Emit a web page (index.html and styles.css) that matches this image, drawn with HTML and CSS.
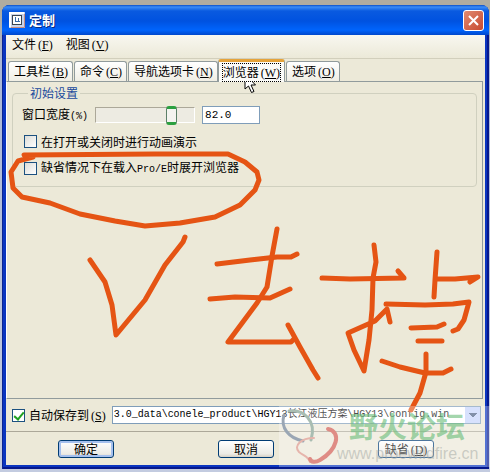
FILE: index.html
```
<!DOCTYPE html>
<html lang="zh-CN">
<head>
	<meta charset="utf-8">
	<title>定制</title>
	<link rel="stylesheet" href="styles.css">
</head>

<body>
	<div class="window">
		<!-- 标题栏 -->
		<div class="titlebar">
			<svg class="appicon" width="16" height="16" viewBox="0 0 16 16">
				<rect width="16" height="16" fill="#c9d3ea"/>
				<path d="M1 15V1h14" fill="none" stroke="#fff" stroke-width="2"/>
				<rect x="3.500" y="3.500" width="9" height="9" fill="#fff" stroke="#3a4450"/>
				<path d="M6.500 5v5M6 9.500h5M9.500 6v4" fill="none" stroke="#3c6ca8"/>
				<path d="M15.500 2v13.500H2" fill="none" stroke="#c98d80"/>
			</svg>
			<h1>定制</h1>
			<button class="xbutton" aria-label="关闭">
				<svg width="13" height="13" viewBox="0 0 13 13"><path d="M2 2l9 9M11 2l-9 9" stroke="#fff" stroke-width="2"/></svg>
			</button>
		</div>

		<div class="client">
			<div class="menubar">
				<button>文件<span class="key">(<u>F</u>)</span></button>
				<button>视图<span class="key">(<u>V</u>)</span></button>
			</div>

			<!-- 选项卡 -->
			<div class="tabs" role="tablist">
				<button role="tab">工具栏<span class="key">(<u>B</u>)</span></button>
				<button role="tab">命令<span class="key">(<u>C</u>)</span></button>
				<button role="tab">导航选项卡<span class="key">(<u>N</u>)</span></button>
				<button role="tab" class="active" aria-selected="true"><span class="focus">浏览器<span class="key">(<u>W</u>)</span></span></button>
				<button role="tab">选项<span class="key">(<u>O</u>)</span></button>
			</div>

			<div class="panel">
				<fieldset>
					<legend>初始设置</legend>
					<div class="row">
						<label for="width">窗口宽度<span class="en">(%)</span></label>
						<input type="range" id="width" min="0" max="100" value="80">
						<input type="text" class="num" value="82.0" aria-label="窗口宽度">
					</div>
					<div class="row">
						<input type="checkbox" id="anim">
						<label for="anim">在打开或关闭时进行动画演示</label>
					</div>
					<div class="row">
						<input type="checkbox" id="expand">
						<label for="expand">缺省情况下在载入<span class="en">Pro/E</span>时展开浏览器</label>
					</div>
				</fieldset>
			</div>

			<div class="savebar">
				<input type="checkbox" id="save" checked>
				<label for="save">自动保存到<span class="key">(<u>S</u>)</span></label>
				<select aria-label="保存位置">
					<option>3.0_data\conele_product\HGY13长江液压方案\HGY13\config.win</option>
				</select>
			</div>

			<div class="buttons">
				<button class="default">确定</button>
				<button>取消</button>
				<button>缺省<span class="key">(<u>D</u>)</span></button>
			</div>
		</div>
	</div>

	<!-- 手写标注 -->
	<svg class="ink" width="490" height="472" viewBox="0 0 490 472">
		<g fill="none" stroke="#e55414" stroke-width="5" stroke-linecap="round" stroke-linejoin="round">
			<path d="M24 155L155 154H228L245 162L257 172L259 180L255 190L240 205L215 217L180 223L145 226L115 221L80 214L50 203L22 197L13 188L11 172L18 161L33 157"/>
			<path d="M90 260L105 282L112 305L116 335L145 300L165 265L183 242L185 237"/>
			<path d="M277 229L272 256L267 287L257 303L228 342H291L294 339"/>
			<path d="M217 264L250 260L277 257H291L297 254"/>
			<path d="M210 299L235 297L270 298L290 289"/>
			<path d="M288 325L300 347L313 370L318 378"/>
			<path d="M322 278L350 279L404 278L398 271"/>
			<path d="M374 245L376 262L373 278L372 310L369 340L364 371L354 350L348 333L375 321L387 309L390 322"/>
			<path d="M386 304L425 305L453 304L469 302L464 320L458 329L453 331"/>
			<path d="M437 252L435 280L434 297M437 279H455L478 277L470 282"/>
			<path d="M411 328L437 327L444 324M418 341H442"/>
			<path d="M382 361L400 367L425 373H443L451 369"/>
			<path d="M426 354L426 372L420 393L411 410"/>
		</g>
	</svg>

	<!-- 鼠标 -->
	<svg class="cursor" width="13" height="21" viewBox="0 0 13 21">
		<path d="M1 1V16L4.500 13L7.500 19.500L10 18.500L7 12H11.500Z" fill="#fff" stroke="#000"/>
	</svg>

	<!-- 论坛水印 -->
	<div class="watermark">
		<svg width="62" height="60" viewBox="0 0 62 60" fill="none" stroke-linecap="round">
			<path d="M5 9C1 22 10 32 24 35" stroke="#9aa6b4" stroke-width="3"/>
			<path d="M10 5C24 3 38 14 32 34" stroke="#a9bdb2" stroke-width="3"/>
			<path d="M35 32C22 32 14 40 20 46C25 50 30 51 31 56" stroke="#e6b5ac" stroke-width="2"/>
			<path d="M49 23C63 26 58 44 41 54C36 57 32 56 31 53" stroke="#df8c85" stroke-width="4"/>
		</svg>
		<div>
			<strong>野火论坛</strong>
			<span>www.proewildfire.cn</span>
		</div>
	</div>
</body>
</html>
```
FILE: styles.css
```
* { box-sizing:border-box; }
body { margin:0; padding:5px 1px 3px 2px; min-height:100vh; display:flex; flex-direction:column; position:relative; background:linear-gradient(#b0aca0 0, #b0aca0 12px, #a9b6d6 60px, #c3cbe0 100%); font:12px/16px "Noto Sans CJK SC", sans-serif; color:#000; }
button, input, select { font:inherit; color:inherit; margin:0; }
h1 { margin:0; font-size:13px; line-height:20px; color:#fff; text-shadow:1px 1px #0a2a80; }

.en { font-family:"Liberation Mono", monospace; font-size:10px; }
.key { margin-left:2px; font-family:"Liberation Serif", serif; }

.window { flex:1; display:flex; flex-direction:column; padding:0 4px 4px; border-radius:8px 8px 0 0; background:#0a35c0; box-shadow:inset 1px 0 #0a2494, inset -2px -2px #06188c; }
.titlebar { display:flex; align-items:center; gap:4px; height:30px; margin:0 -4px; padding:0 5px 0 7px; border-radius:7px 7px 0 0; background:linear-gradient(#0a4fc8 0, #3a8cf8 2px, #0a5ae0 6px, #0052e0 16px, #0064fc 25px, #0048cc 30px); }
.titlebar h1 { flex:1; }
.xbutton { display:flex; align-items:center; justify-content:center; width:21px; height:21px; padding:0; border:1px solid #fff; border-radius:3px; background:linear-gradient(135deg, #e08a70, #c84a30); }

.client { flex:1; display:flex; flex-direction:column; background:#ece9d8; }
.menubar { display:flex; gap:13px; height:24px; padding:0 6px 4px; border-bottom:1px solid #d2cfbc; background:linear-gradient(#f8f7f0, #ece9d8); }
.menubar button { padding:0; border:0; background:none; }

.tabs { display:flex; align-items:flex-end; height:22px; padding-left:2px; gap:1px; }
.tabs button { height:20px; padding:0 4px 0 5px; border:1px solid #919b9c; border-bottom:0; border-radius:3px 3px 0 0; background:linear-gradient(#fff, #f0eee4); white-space:nowrap; }
.tabs .active { height:23px; margin:0 0 -1px -1px; padding:0 4px; border-top:3px solid #e5a33a; background:#fbfbf8; z-index:1; }
.focus { display:block; outline:1px dotted #000; }

.panel { flex:1; margin-right:2px; padding:3px 5px; border:1px solid #919b9c; border-left-color:#fff; }
fieldset { margin:0; min-width:0; height:102px; padding:1px 9px 0 11px; border:1px solid #d0d0bf; border-radius:4px; }
legend { margin-left:4px; padding:0 2px; color:#1a4a9c; }
.row { display:flex; align-items:center; height:27px; }
.row label { margin-left:4px; }
.row:first-of-type { height:26px; margin-left:-2px; }
.row:first-of-type label { margin-left:0; }

input[type=checkbox] { appearance:none; width:13px; height:13px; border:1px solid #1c5180; background:linear-gradient(135deg, #dcdcd7, #fff); }
input[type=checkbox]:checked { background:#fff; position:relative; }
input[type=checkbox]:checked::after { content:""; position:absolute; left:3px; top:0; width:4px; height:8px; border:solid #21a121; border-width:0 2px 2px 0; transform:rotate(40deg); }

input[type=range] { appearance:none; width:100px; height:16px; margin:0 7px; border:1px solid #aca899; border-right-color:#fff; border-bottom-color:#fff; background:#edebe2; }
input[type=range]::-webkit-slider-thumb { appearance:none; width:11px; height:19px; border:1px solid #5c8068; border-top:3px solid #2ca040; border-bottom:3px solid #2ca040; border-radius:3px; background:#f4f4f0; }
.num { width:58px; height:18px; padding:0 2px; border:1px solid #7f9db9; background:#fff; font:11px "Liberation Mono", monospace; }

.savebar { display:flex; align-items:center; height:33px; padding:0 4px 0 6px; border-bottom:1px solid #aca899; }
.savebar label { margin:0 6px 0 4px; white-space:nowrap; }
.savebar select { appearance:none; flex:1; min-width:0; height:18px; padding:0 17px 0 1px; border:1px solid #7f9db9; border-radius:0; font-family:"Liberation Mono", "Noto Sans CJK SC", monospace; font-size-adjust:ch-width 0.5; background:linear-gradient(45deg, transparent 50%, #4d6185 50%) right 7px top 6px / 4px 4px no-repeat, linear-gradient(-45deg, transparent 50%, #4d6185 50%) right 3px top 6px / 4px 4px no-repeat, linear-gradient(#c6d5fc, #c6d5fc) right / 15px 100% no-repeat, #fff; }

.buttons { display:flex; justify-content:space-between; padding:8px 51px 7px 52px; }
.buttons button { width:56px; height:18px; padding:0; border:1px solid #003c74; border-radius:3px; background:linear-gradient(#fff, #ecebe5 80%, #d6d0c5); line-height:14px; }
.buttons .default { box-shadow:inset 0 0 0 2px #a5c0ee; }

.ink { position:absolute; left:0; top:0; pointer-events:none; }
.cursor { position:absolute; left:244px; top:73px; pointer-events:none; }

.watermark { position:absolute; right:0; bottom:5px; display:flex; width:211px; height:61px; background:rgba(255,255,255,0.3); pointer-events:none; }
.watermark svg { flex:none; margin-right:-4px; }
.watermark div { display:flex; flex-direction:column; }
.watermark strong { padding-left:12px; font-size:29px; line-height:38px; color:rgba(110,190,125,0.65); }
.watermark span { font:16px/20px "Liberation Sans", sans-serif; color:rgba(160,165,160,0.5); }
```
